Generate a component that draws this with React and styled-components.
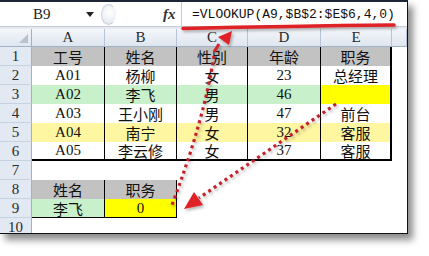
import React from 'react';
import styled, { createGlobalStyle } from 'styled-components';

const GlobalStyle = createGlobalStyle`
  html, body {
    margin: 0;
    padding: 0;
    background: #fff;
  }
  body {
    width: 429px;
    height: 256px;
    overflow: hidden;
    font-family: "Liberation Mono", "Noto Sans CJK SC", monospace;
  }
`;

const GRAY = '#c2c2c2';
const GREEN = '#c8f0cb';
const YELLOW = '#ffff00';
const PALE = '#fff6a2';

const SERIF = '"Liberation Serif", "Noto Sans CJK SC", serif';

const Stage = styled.div`
  position: relative;
  width: 429px;
  height: 256px;
`;

const Frame = styled.div`
  box-sizing: border-box;
  width: 408px;
  height: 234px;
  border-top: 2px solid #1d2635;
  border-right: 1px solid #111;
  border-bottom: 1px solid #111;
  background: #fff;
  overflow: hidden;
  box-shadow: 5px 6px 7px rgba(0, 0, 0, 0.45);
  display: flex;
  flex-direction: column;
`;

const FormulaBar = styled.div`
  display: flex;
  align-items: stretch;
  height: 24px;
  flex: none;
  background: #fff;
  border-bottom: 1px solid #c3ccd8;
`;

const NameBox = styled.div`
  position: relative;
  width: 98px;
  display: flex;
  align-items: center;
  padding-left: 33px;
  box-sizing: border-box;
  font-family: ${SERIF};
  font-size: 15px;
  color: #222;
`;

const DropArrow = styled.span`
  position: absolute;
  right: 4px;
  top: 10px;
  width: 0;
  height: 0;
  border-left: 4px solid transparent;
  border-right: 4px solid transparent;
  border-top: 5px solid #222;
`;

const Grip = styled.div`
  width: 13px;
  height: 19px;
  margin: 2px 0 0 3px;
  border-radius: 50%;
  border: 1px solid #c9d1dc;
  border-right-color: #eef1f5;
  background: radial-gradient(circle at 60% 40%, #ffffff 0%, #e9edf2 70%, #d8dee6 100%);
`;

const FxLabel = styled.div`
  margin-left: 47px;
  width: 18px;
  display: flex;
  align-items: center;
  font-family: "Liberation Serif", serif;
  font-style: italic;
  font-weight: bold;
  font-size: 15px;
  color: #333;
`;

const FormulaInput = styled.div`
  flex: 1;
  display: flex;
  align-items: center;
  padding-left: 10px;
  border-left: 1px solid #c3ccd8;
  font-size: 13px;
  color: #111;
  white-space: nowrap;
`;

const Gap = styled.div`
  height: 2px;
  flex: none;
  background: #e6eaf0;
`;

const Sheet = styled.div`
  display: grid;
  grid-template-columns: 32px 73px 72px 71px 73px 71px 1fr;
  grid-template-rows: 18px repeat(10, 19px);
`;

const Corner = styled.div`
  box-sizing: border-box;
  display: flex;
  align-items: flex-end;
  justify-content: flex-end;
  padding: 0 3px 3px 0;
  background: linear-gradient(#f3f6fa, #dfe6ef);
  border-right: 1px solid #9fb3c8;
  border-bottom: 1px solid #9fb3c8;
`;

const CornerMark = styled.span`
  width: 0;
  height: 0;
  border-left: 9px solid transparent;
  border-bottom: 9px solid #b9c1cb;
`;

const ColHead = styled.div`
  box-sizing: border-box;
  display: flex;
  align-items: center;
  justify-content: center;
  background: linear-gradient(#f3f6fa, #dfe6ef);
  border-right: 1px solid #b5c4d6;
  border-bottom: 1px solid #9fb3c8;
  font-family: ${SERIF};
  font-size: 15px;
  color: #2b2b2b;
`;

const RowHead = styled.div`
  box-sizing: border-box;
  display: flex;
  align-items: center;
  justify-content: center;
  background: #e2e9f3;
  border-right: 1px solid #9fb3c8;
  border-bottom: 1px solid #c6d2e0;
  font-family: ${SERIF};
  font-size: 15px;
  color: #2b2b2b;
`;

const Cell = styled.div`
  box-sizing: border-box;
  display: flex;
  align-items: center;
  justify-content: center;
  background: ${p => p.$bg || '#fff'};
  border-right: ${p => (p.$right ? `${p.$right}px solid #000` : 'none')};
  border-bottom: ${p => (p.$bottom ? `${p.$bottom}px solid #000` : 'none')};
  font-family: ${SERIF};
  font-size: 15px;
  color: #111;
  white-space: nowrap;
`;

const Overlay = styled.svg`
  position: absolute;
  left: 0;
  top: 0;
  pointer-events: none;
`;

const columns = ['A', 'B', 'C', 'D', 'E'];

const table = [
  { values: ['工号', '姓名', '性别', '年龄', '职务'], fills: [GRAY, GRAY, GRAY, GRAY, GRAY] },
  { values: ['A01', '杨柳', '女', '23', '总经理'], fills: [] },
  { values: ['A02', '李飞', '男', '46', ''], fills: [GREEN, GREEN, GREEN, GREEN, YELLOW] },
  { values: ['A03', '王小刚', '男', '47', '前台'], fills: [] },
  { values: ['A04', '南宁', '女', '32', '客服'], fills: [PALE, PALE, PALE, PALE, PALE] },
  { values: ['A05', '李云修', '女', '37', '客服'], fills: [] },
];

const lookup = [
  { values: ['姓名', '职务'], fills: [GRAY, GRAY], bottom: 0 },
  { values: ['李飞', '0'], fills: [GREEN, YELLOW], bottom: 1 },
];

const buildRows = () => {
  const rows = [];
  table.forEach((row, i) => {
    rows.push(
      columns.map((_, c) => ({
        text: row.values[c],
        bg: row.fills[c],
        right: c === 4 ? 2 : 1,
        bottom: i === 5 ? 2 : 0,
      })),
    );
  });
  rows.push(columns.map(() => ({ text: '' })));
  lookup.forEach(row => {
    rows.push(
      columns.map((_, c) =>
        c < 2
          ? { text: row.values[c], bg: row.fills[c], right: 1, bottom: row.bottom }
          : { text: '' },
      ),
    );
  });
  rows.push(columns.map(() => ({ text: '' })));
  return rows;
};

const Annotations = () => (
  <Overlay width="429" height="256" viewBox="0 0 429 256">
    <defs>
      <filter id="soft" x="-20%" y="-20%" width="140%" height="140%">
        <feDropShadow dx="1.5" dy="2" stdDeviation="1.4" floodColor="#000" floodOpacity="0.3" />
      </filter>
    </defs>
    <g filter="url(#soft)">
      <path d="M183 28.5 Q290 26 394 25" stroke="#de2026" strokeWidth="3.5" fill="none" strokeLinecap="round" />
      <path d="M219 44 L214 52" stroke="#d2252b" strokeWidth="3" fill="none" />
      <polygon points="232,31 229,45 218,37" fill="#de2026" />
      <path
        d="M214 56 Q204 120 172 205"
        stroke="#c3202a"
        strokeWidth="3.2"
        fill="none"
        strokeDasharray="3 3.6"
      />
      <path
        d="M336 104 L199 198"
        stroke="#c3202a"
        strokeWidth="3.2"
        fill="none"
        strokeDasharray="3 3.6"
      />
      <polygon points="184,209 194,192 203,205" fill="#de2026" />
    </g>
  </Overlay>
);

export default function App() {
  const rows = buildRows();
  return (
    <Stage>
      <GlobalStyle />
      <Frame>
        <FormulaBar>
          <NameBox>
            B9
            <DropArrow />
          </NameBox>
          <Grip />
          <FxLabel>fx</FxLabel>
          <FormulaInput>=VLOOKUP(A9,$B$2:$E$6,4,0)</FormulaInput>
        </FormulaBar>
        <Gap />
        <Sheet>
          <Corner>
            <CornerMark />
          </Corner>
          {columns.map(col => (
            <ColHead key={col}>{col}</ColHead>
          ))}
          <ColHead />
          {rows.map((cells, r) => (
            <React.Fragment key={r}>
              <RowHead>{r + 1}</RowHead>
              {cells.map((cell, c) => (
                <Cell key={c} $bg={cell.bg} $right={cell.right} $bottom={cell.bottom}>
                  {cell.text}
                </Cell>
              ))}
              <Cell />
            </React.Fragment>
          ))}
        </Sheet>
      </Frame>
      <Annotations />
    </Stage>
  );
}
